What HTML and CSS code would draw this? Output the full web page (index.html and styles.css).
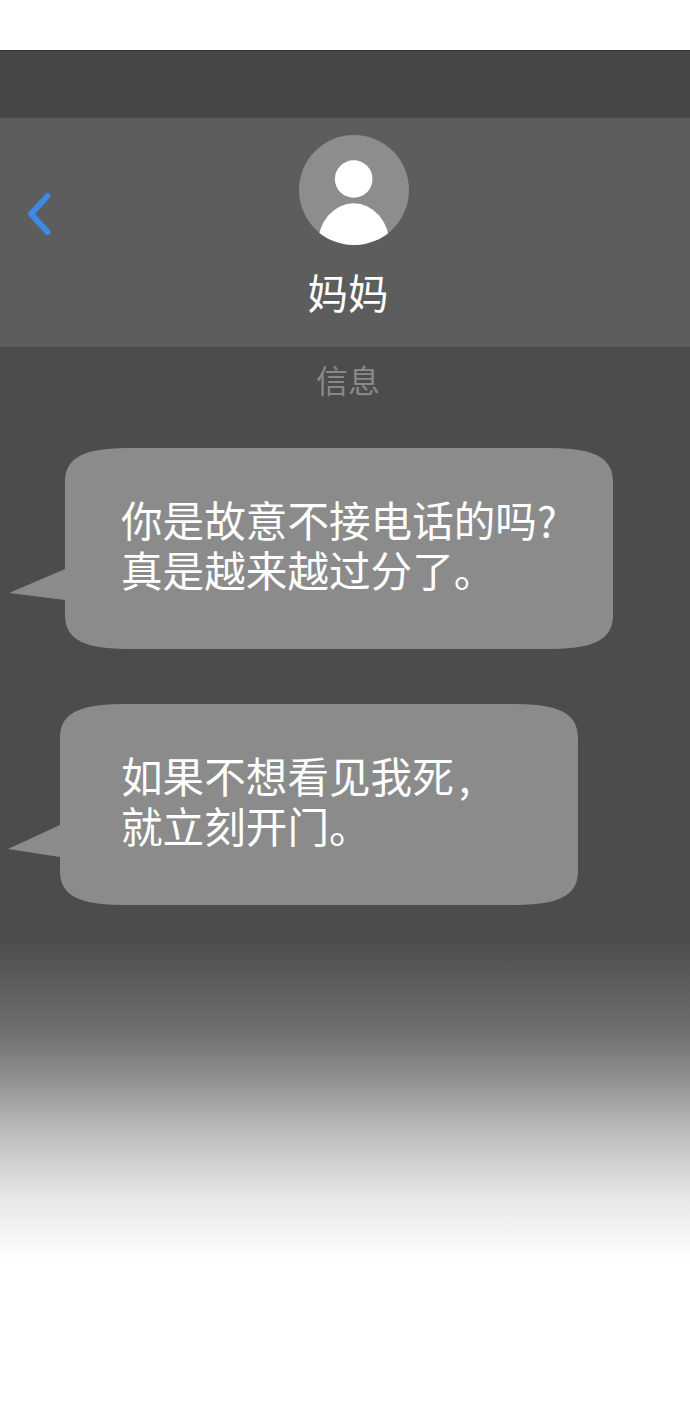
FILE: index.html
```html
<!DOCTYPE html>
<html>
<head>
	<meta charset="utf-8"/>
	<title>妈妈</title>
	<link rel="stylesheet" href="styles.css">
</head>
<body>
	<div class="topgap"></div>
	<div class="screen">
		<div class="statusbar"></div>
		<div class="header">
			<svg class="back" width="30" height="46" viewBox="0 0 30 46">
				<path d="M23.5 5 L7 23 L23.5 41" fill="none" stroke="#3b8ae6" stroke-width="6" stroke-linecap="round" stroke-linejoin="round"/>
			</svg>
			<div class="contact">
				<svg class="avatar" width="110" height="110" viewBox="0 0 110 110">
					<defs>
						<clipPath id="round"><circle cx="55" cy="55" r="55"/></clipPath>
					</defs>
					<circle cx="55" cy="55" r="55" fill="#8d8d8d"/>
					<circle cx="54.7" cy="44" r="18.8" fill="#fff"/>
					<ellipse cx="54.7" cy="110.3" rx="36" ry="42" fill="#fff" clip-path="url(#round)"/>
				</svg>
				<div class="name">妈妈</div>
			</div>
		</div>
		<div class="label">信息</div>
		<div class="bubble bubble-first">
			<p>你是故意不接电话的吗?<br>真是越来越过分了。</p>
		</div>
		<div class="bubble bubble-second">
			<p>如果不想看见我死<span class="comma">,</span><br>就立刻开门。</p>
		</div>
	</div>
</body>
</html>
```

FILE: styles.css
```css
*{
	margin:0;
	padding:0;
	box-sizing:border-box;
}
html,body{
	background:#fff;
}
body{
	width:690px;
	height:1410px;
	overflow:hidden;
	font-family:"Noto Sans CJK SC","Noto Sans",sans-serif;
	color:#fff;
}
.topgap{
	height:50px;
	background:#fff;
}
.screen{
	height:1212px;
	border-top:1px solid #333;
	background:linear-gradient(to bottom,#4c4c4c 0,#4c4c4c 889px,#6e6e6e 979px,#8d8d8d 1024px,#bbb 1079px,#e8e8e8 1149px,#fff 1211px);
}
.statusbar{
	height:67px;
	background:#464646;
}
.header{
	display:flex;
	height:229px;
	padding-left:24px;
	background:#5d5d5d;
	border-bottom:1px solid #585858;
}
.back{
	flex:none;
	margin-top:73px;
}
.contact{
	flex:1;
	display:flex;
	flex-direction:column;
	align-items:center;
	padding:17px 48px 0 0;
}
.avatar{
	display:block;
	margin-left:11px;
}
.name{
	margin-top:20px;
	font-size:40.5px;
	line-height:54px;
}
.label{
	height:101px;
	padding:10px 0 0 6px;
	font-size:32px;
	line-height:44px;
	text-align:center;
	color:#888;
}
.bubble{
	height:201px;
	background:#8b8b8b;
	font-size:41.6px;
	line-height:50px;
	white-space:nowrap;
}
.bubble p{
	padding-top:46px;
}
.comma{
	margin-left:5px;
}
.bubble-first{
	width:604px;
	margin-left:9px;
	clip-path:path("M56 34 C56 14 68 0 118 0 H542 C592 0 604 14 604 34 V167 C604 187 592 201 542 201 H118 C68 201 56 187 56 167 V152 L0 145 L56 121 Z");
}
.bubble-first p{
	padding-left:112px;
}
.bubble-second{
	width:570px;
	margin-top:55px;
	margin-left:8px;
	clip-path:path("M52 34 C52 14 64 0 114 0 H508 C558 0 570 14 570 34 V167 C570 187 558 201 508 201 H114 C64 201 52 187 52 167 V153 L0 145 L52 121 Z");
}
.bubble-second p{
	padding-left:113px;
}
```
